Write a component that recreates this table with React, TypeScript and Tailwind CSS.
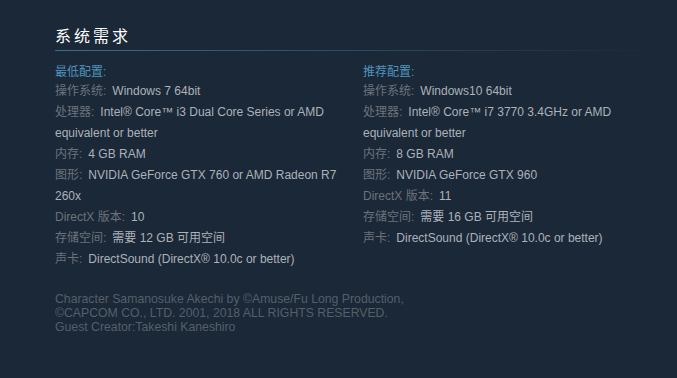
const minimum: [string, string][] = [
  ["操作系统:", "Windows 7 64bit"],
  ["处理器:", "Intel® Core™ i3 Dual Core Series or AMD equivalent or better"],
  ["内存:", "4 GB RAM"],
  ["图形:", "NVIDIA GeForce GTX 760 or AMD Radeon R7 260x"],
  ["DirectX 版本:", "10"],
  ["存储空间:", "需要 12 GB 可用空间"],
  ["声卡:", "DirectSound (DirectX® 10.0c or better)"],
];

const recommended: [string, string][] = [
  ["操作系统:", "Windows10 64bit"],
  ["处理器:", "Intel® Core™ i7 3770 3.4GHz or AMD equivalent or better"],
  ["内存:", "8 GB RAM"],
  ["图形:", "NVIDIA GeForce GTX 960"],
  ["DirectX 版本:", "11"],
  ["存储空间:", "需要 16 GB 可用空间"],
  ["声卡:", "DirectSound (DirectX® 10.0c or better)"],
];

const ReqCol = ({ title, rows }: { title: string; rows: [string, string][] }) => {
  return (
    <div className="w-[296px]">
      <div className="text-[#4f94bc] leading-[18px]">{title}</div>
      <ul className="leading-[21px]">
        {rows.map(([label, value]) => (
          <li key={label}>
            <span className="text-[#6b737b] mr-[6px]">{label}</span>
            <span className="text-[#acb2b8]">{value}</span>
          </li>
        ))}
      </ul>
    </div>
  );
};

const App = () => {
  return (
    <div
      className="w-[677px] h-[378px] bg-[#1b2838] overflow-hidden pl-[55px] pt-[26px]"
      style={{ fontFamily: '"Liberation Sans", Arial, "Noto Sans CJK SC", sans-serif' }}
    >
      <div className="w-[608px]">
        <h2 className="text-white text-[16px] tracking-[3px] leading-[22px] pb-[2px]">系统需求</h2>
        <div className="h-px bg-gradient-to-r from-[#3a6e8f] via-[#2c4a63] to-[#1b2838]" />
      </div>
      <div className="flex gap-[12px] mt-[12px] text-[12px] w-[608px]">
        <ReqCol title="最低配置:" rows={minimum} />
        <ReqCol title="推荐配置:" rows={recommended} />
      </div>
      <div className="mt-[22px] text-[12.25px] leading-[14px] text-[#555f69]">
        <div>Character Samanosuke Akechi by ©Amuse/Fu Long Production,</div>
        <div>©CAPCOM CO., LTD. 2001, 2018 ALL RIGHTS RESERVED.</div>
        <div>Guest Creator:Takeshi Kaneshiro</div>
      </div>
    </div>
  );
};

export default App;
